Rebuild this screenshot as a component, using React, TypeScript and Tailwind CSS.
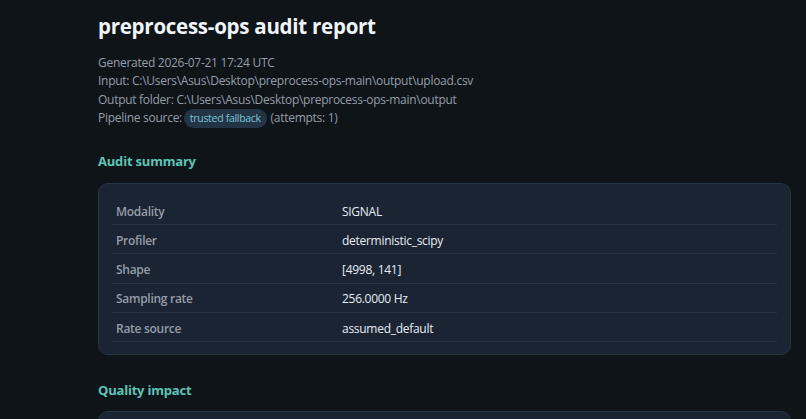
const summary = [
  ["Modality", "SIGNAL"],
  ["Profiler", "deterministic_scipy"],
  ["Shape", "[4998, 141]"],
  ["Sampling rate", "256.0000 Hz"],
  ["Rate source", "assumed_default"],
];

export default function App() {
  return (
    <div className="h-screen overflow-hidden bg-[#0f1419] pl-[98px] pr-[15px] pt-[11px] font-['Open_Sans',sans-serif] text-[12px] tracking-[-0.28px] text-[#e6edf3]">
      {/* Header */}
      <h1 className="text-[20.5px] leading-[30px] font-bold tracking-[-0.26px] text-[#f0f4f8]">preprocess-ops audit report</h1>
      <div className="mt-[13px] text-[#959da8] leading-[18.3px]">
        <div>Generated 2026-07-21 17:24 UTC</div>
        <div>Input: C:\Users\Asus\Desktop\preprocess-ops-main\output\upload.csv</div>
        <div>Output folder: C:\Users\Asus\Desktop\preprocess-ops-main\output</div>
        <div>
          Pipeline source:{" "}
          <span className="-ml-[1px] mr-[1px] inline-block rounded-full bg-[#243447] px-[6px] text-[10.5px] leading-[19px] tracking-[-0.3px] text-[#7cc4d4]">trusted fallback</span>{" "}
          (attempts: 1)
        </div>
      </div>

      {/* Audit summary */}
      <h2 className="mt-[24px] text-[13px] leading-[18px] font-bold tracking-[-0.2px] text-[#5ec4b6]">Audit summary</h2>
      <div className="mt-[13px] rounded-[10px] border border-[#273445] bg-[#1a2433] px-[13px] pt-[12px] pb-[12px]">
        {summary.map(([label, value]) => (
          <div key={label} className="grid h-[29.3px] grid-cols-[226px_1fr] items-center border-b border-[#273445] px-[4px] pt-[3px]">
            <span className="font-semibold text-[#959da8]">{label}</span>
            <span>{value}</span>
          </div>
        ))}
      </div>

      {/* Quality impact */}
      <h2 className="mt-[26px] text-[13px] leading-[18px] font-bold tracking-[-0.2px] text-[#5ec4b6]">Quality impact</h2>
      <div className="mt-[12px] h-[120px] rounded-[10px] border border-[#273445] bg-[#1a2433]" />
    </div>
  );
}
